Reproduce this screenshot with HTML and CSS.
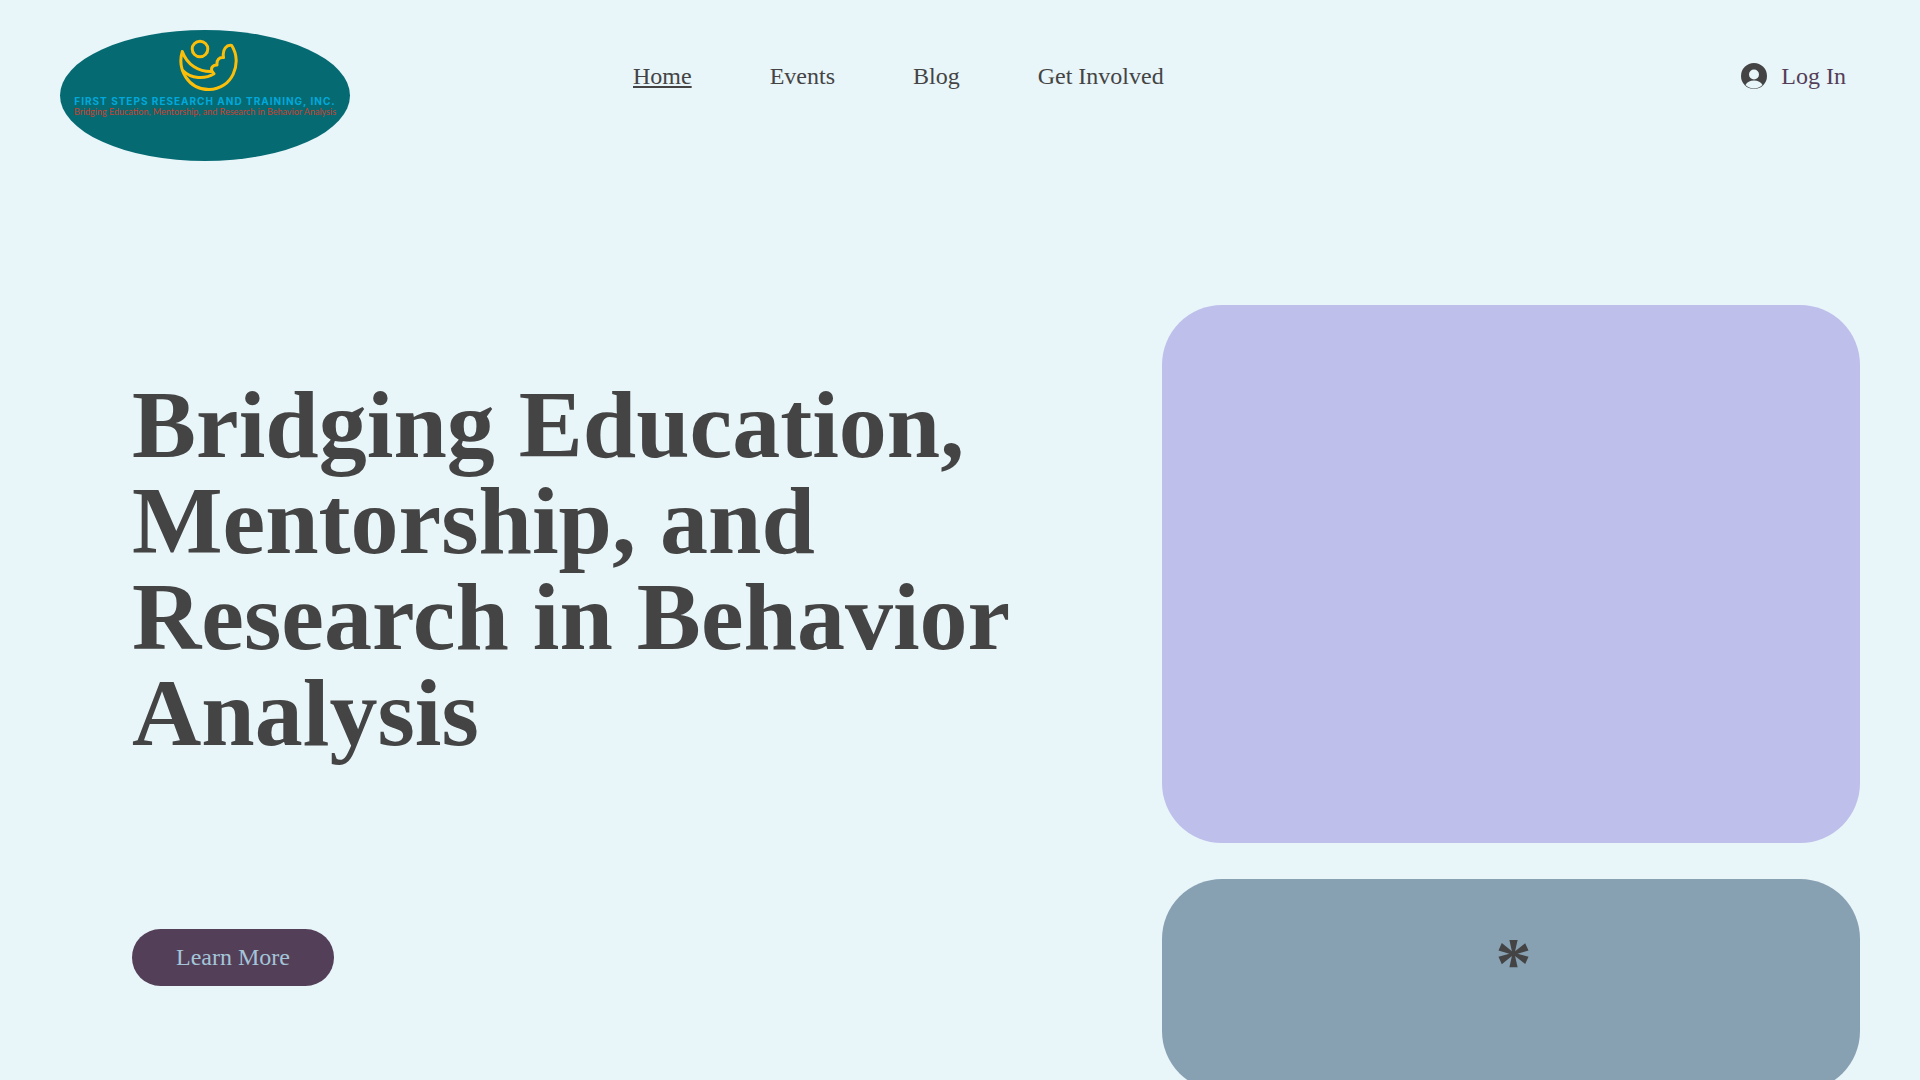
FILE: index.html
```html
<!DOCTYPE html>
<html lang="en">
<head>
    <meta charset="UTF-8">
    <meta name="viewport" content="width=device-width, initial-scale=1.0">
    <title>First Steps Research and Training, Inc.</title>
    <link rel="stylesheet" href="styles.css">
</head>
<body>
    <header class="site-header">
        <a class="logo" href="#">
            <svg class="logo-mark" viewBox="0 0 60 54" aria-hidden="true">
                <circle cx="21" cy="10" r="7.800"/>
                <path d="M3.300 12.500C-2 30 9 50.500 30 50.500C53 50.500 64 24 52.700 6.500C48 5.500 43 10 44.500 18.500C40 18 37.500 21 38 26C34 26 31.500 28.500 33 32.500C20 33 8 26 3.300 12.500Z"/>
                <path d="M33 32.500L35 34.800C26 40.500 12 40 3.800 31.500"/>
            </svg>
            <span class="logo-name">FIRST STEPS RESEARCH AND TRAINING, INC.</span>
            <span class="logo-tagline">Bridging Education, Mentorship, and Research in Behavior Analysis</span>
        </a>
        <nav class="main-nav">
            <a class="active" href="#">Home</a>
            <a href="#">Events</a>
            <a href="#">Blog</a>
            <a href="#">Get Involved</a>
        </nav>
        <button class="login" type="button">
            <svg class="login-icon" viewBox="0 0 26 26" aria-hidden="true">
                <path fill-rule="evenodd" d="M13 0a13 13 0 1 1 0 26a13 13 0 0 1 0-26zM13 6.500a5 5 0 1 0 0 10a5 5 0 0 0 0-10zM4.500 22a12.300 12.300 0 0 0 17 0c-1.500-2.800-4.500-4.500-8.500-4.500s-7 1.700-8.500 4.500z"/>
            </svg>
            <span>Log In</span>
        </button>
    </header>

    <main class="hero">
        <section class="intro">
            <h1>Bridging Education, Mentorship, and Research in Behavior Analysis</h1>
            <a class="learn-more" href="#">Learn More</a>
        </section>
        <section class="cards">
            <div class="card card-photo"></div>
            <div class="card card-note">*</div>
        </section>
    </main>
</body>
</html>
```
FILE: styles.css
```css
* {
    box-sizing: border-box;
}

body {
    margin: 0;
    min-height: 100vh;
    background: #e8f5f9;
    color: #444;
    font-family: "Liberation Serif", "Times New Roman", serif;
    font-size: 24px;
    line-height: 28px;
    overflow-x: hidden;
}

a {
    color: inherit;
    text-decoration: none;
}

.site-header {
    display: grid;
    grid-template-columns: 290px 1fr auto;
    align-items: start;
    padding: 30px 74px 0 60px;
}

/* Logo */
.logo {
    display: flex;
    flex-direction: column;
    align-items: center;
    height: 131px;
    padding-top: 9px;
    border-radius: 50%;
    background: #066a73;
    white-space: nowrap;
}

.logo-mark {
    width: 60px;
    height: 54px;
    margin: 0 0 2px 8px;
    fill: none;
    stroke: #fcbf09;
    stroke-width: 3;
    stroke-linejoin: round;
    stroke-linecap: round;
}

.logo-name {
    color: #00a9dc;
    font-family: Inter, sans-serif;
    font-size: 10px;
    font-weight: 700;
    line-height: 12px;
    letter-spacing: 1px;
}

.logo-tagline {
    color: #c8412f;
    font-family: Lato, sans-serif;
    font-size: 9px;
    line-height: 10px;
}

/* Navigation */
.main-nav {
    display: flex;
    gap: 78px;
    padding: 32px 0 0 283px;
}

.main-nav .active {
    text-decoration: underline;
}

.login {
    display: flex;
    align-items: center;
    gap: 14px;
    margin-top: 32px;
    padding: 0;
    border: 0;
    background: none;
    color: #543f58;
    font: inherit;
    cursor: pointer;
}

.login-icon {
    width: 26px;
    height: 26px;
    fill: #444;
}

/* Hero */
.hero {
    display: grid;
    grid-template-columns: 1fr 698px;
    gap: 100px;
    padding: 144px 60px 0 132px;
}

.intro {
    padding-top: 72px;
}

h1 {
    margin: 0 0 168px;
    font-size: 96px;
    line-height: 96px;
}

.learn-more {
    display: inline-block;
    padding: 14px 44px 15px;
    border-radius: 29px;
    background: #543f58;
    color: #a4c5d8;
}

.cards {
    display: flex;
    flex-direction: column;
    gap: 36px;
}

.card {
    border-radius: 60px;
}

.card-photo {
    height: 538px;
    background: #bebfeb;
}

.card-note {
    height: 212px;
    padding: 48px 0 0 5px;
    background: #87a1b3;
    font-size: 72px;
    font-weight: bold;
    line-height: 72px;
    text-align: center;
}
```
